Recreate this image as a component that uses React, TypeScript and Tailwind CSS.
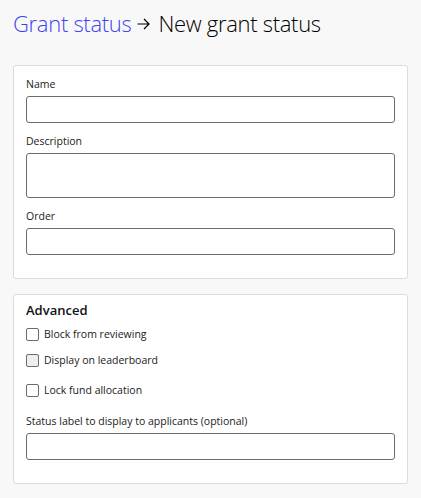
import React from 'react'

function Field({ label, tall }: { label: string; tall?: boolean }) {
  return (
    <div className="flex flex-col">
      <label className="text-[10.5px] leading-[14px] text-[#1a1a1a] mb-[5px]">{label}</label>
      {tall ? (
        <textarea className="h-[45px] w-full rounded-[3px] border border-[#6b6b6b] bg-white resize-none" />
      ) : (
        <input className="h-[27px] w-full rounded-[3px] border border-[#6b6b6b] bg-white" />
      )}
    </div>
  )
}

function Check({ label, muted, className = '' }: { label: string; muted?: boolean; className?: string }) {
  return (
    <label className={`flex items-center gap-[5px] text-[10.5px] leading-[14px] text-[#1a1a1a] ${className}`}>
      <span
        className={`h-[13px] w-[13px] rounded-[2px] border border-[#6b6b6b] ${muted ? 'bg-[#eeeeee]' : 'bg-white'}`}
      />
      {label}
    </label>
  )
}

export default function App() {
  return (
    <div
      className="min-h-[498px] bg-[#f8f8f8] px-[13px] pt-[8px] pb-[14px]"
      style={{ fontFamily: '"Open Sans", "Noto Sans", sans-serif' }}
    >
      <h1 className="flex items-center text-[22px] leading-[30px] font-light tracking-[-0.3px] text-black">
        <a className="text-[#3d45f2]">Grant status</a>
        <svg className="ml-[6px] mr-[8px] mt-[1px] h-[12px] w-[13px]" viewBox="0 0 13 12" fill="none" stroke="currentColor" strokeWidth={1.2}>
          <path d="M0.5 6h11.5M7 1l5 5-5 5" />
        </svg>
        <span>New grant status</span>
      </h1>

      <div className="mt-[27px] rounded-[3px] border border-[#dcdcdc] bg-white px-[12px] pt-[11px] pb-[23px] flex flex-col gap-[11px]">
        <Field label="Name" />
        <Field label="Description" tall />
        <Field label="Order" />
      </div>

      <div className="mt-[15px] rounded-[3px] border border-[#dcdcdc] bg-white px-[12px] pt-[6px] pb-[23px]">
        <h2 className="text-[13px] leading-[18px] font-semibold text-[#111]">Advanced</h2>
        <Check label="Block from reviewing" className="mt-[8px]" />
        <Check label="Display on leaderboard" muted className="mt-[12px]" />
        <Check label="Lock fund allocation" className="mt-[16px]" />
        <div className="mt-[17px]">
          <Field label="Status label to display to applicants (optional)" />
        </div>
      </div>
    </div>
  )
}
